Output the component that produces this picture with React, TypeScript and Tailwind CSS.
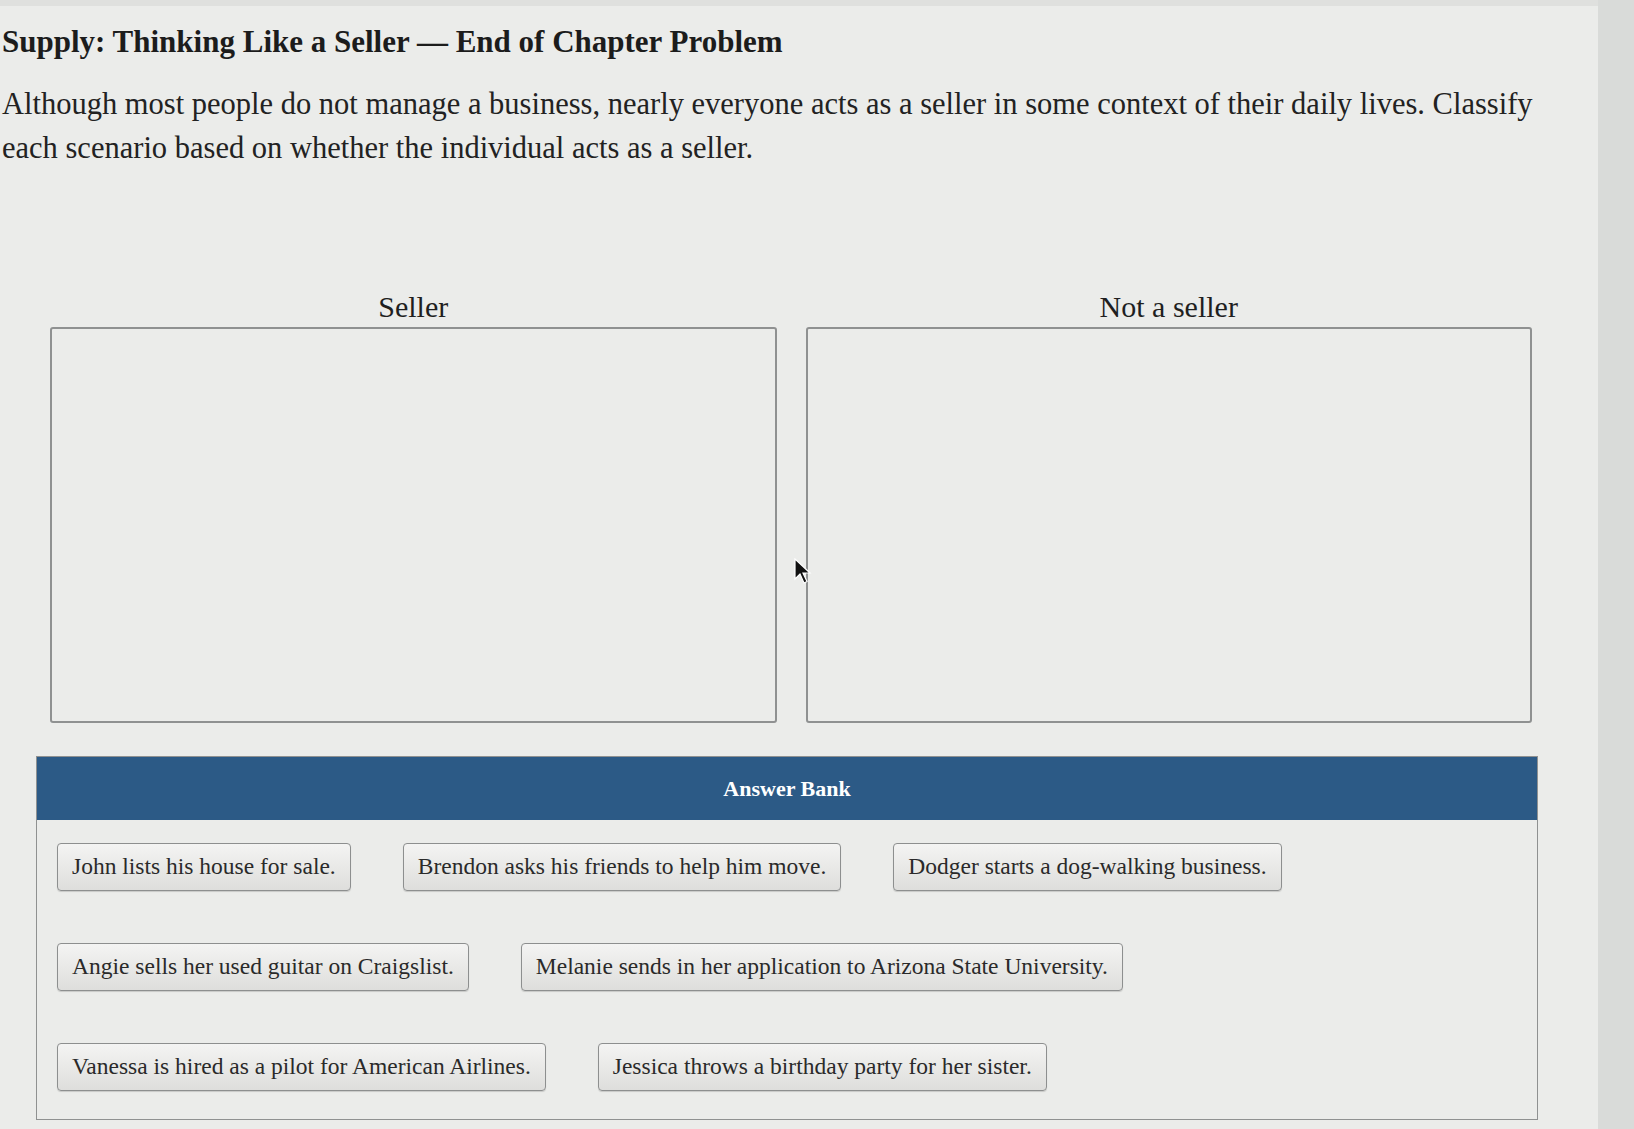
import React from 'react'

const rows: string[][] = [
  ['John lists his house for sale.', 'Brendon asks his friends to help him move.', 'Dodger starts a dog-walking business.'],
  ['Angie sells her used guitar on Craigslist.', 'Melanie sends in her application to Arizona State University.'],
  ['Vanessa is hired as a pilot for American Airlines.', 'Jessica throws a birthday party for her sister.'],
]

function Chip({ label }: { label: string }) {
  return (
    <div className="inline-flex h-[48px] items-center rounded-[4px] border border-[#8d8f8f] bg-gradient-to-b from-[#f4f4f3] to-[#dededc] px-[14px] text-[23.5px] text-[#2a2a2a] shadow-[0_1px_1px_rgba(0,0,0,0.15)]">
      {label}
    </div>
  )
}

function DropZone({ title }: { title: string }) {
  return (
    <div className="flex flex-col">
      <div className="text-center text-[30px] leading-[36px] text-[#1f1f1f]">{title}</div>
      <div className="mt-[2px] h-[396px] rounded-[3px] border-2 border-[#8f9191] bg-[#ebecea]" />
    </div>
  )
}

export default function App() {
  return (
    <div className="flex min-h-screen bg-[#d9dbd9] font-['Liberation_Serif',serif]">
      <div className="relative min-h-[1129px] w-[1598px] border-t-[6px] border-[#dfe0de] bg-[#ebecea] pl-[2px] pt-[12px]">
        <h1 className="text-[31px] font-bold leading-[48px] text-[#1c1c1c]">
          Supply: Thinking Like a Seller — End of Chapter Problem
        </h1>
        <p className="mt-[16px] pr-[40px] text-[30.5px] leading-[44px] text-[#222]">
          Although most people do not manage a business, nearly everyone acts as a seller in some context of their daily lives. Classify each scenario based on whether the individual acts as a seller.
        </p>

        <div className="ml-[48px] mt-[119px] grid w-[1482px] grid-cols-2 gap-[29px]">
          <DropZone title="Seller" />
          <DropZone title="Not a seller" />
        </div>

        <div className="ml-[34px] mt-[33px] w-[1502px] border border-[#8f9191]">
          <div className="flex h-[63px] items-center justify-center bg-[#2c5a86] text-[22px] font-bold text-white">
            Answer Bank
          </div>
          <div className="flex flex-col gap-[52px] pb-[28px] pl-[20px] pt-[23px]">
            {rows.map((row, i) => (
              <div key={i} className="flex gap-[52px]">
                {row.map((c) => (
                  <Chip key={c} label={c} />
                ))}
              </div>
            ))}
          </div>
        </div>

        {/* mouse pointer */}
        <svg className="absolute left-[794px] top-[552px]" width="18" height="26" viewBox="0 0 18 26">
          <path d="M1 1 L1 21 L6 16 L10 25 L13 23.5 L9 15 L16 15 Z" fill="#111" stroke="#fff" strokeWidth="1.2" />
        </svg>
      </div>
    </div>
  )
}
